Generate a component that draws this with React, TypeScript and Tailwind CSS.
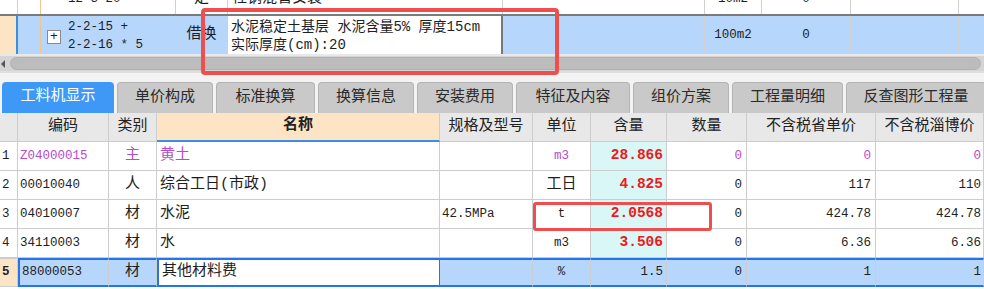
import React from "react";

const topCols = ["w-[18px]", "w-[23px]", "w-[135px]", "w-[52px]", "w-[275px]", "w-[202px]", "w-[57px]", "w-[89px]", "w-[108px]", "w-[25px]"];
const cols = ["w-[18px]", "w-[91px]", "w-[48px]", "w-[283px]", "w-[93px]", "w-[58px]", "w-[76px]", "w-[80px]", "w-[129px]", "w-[108px]"];

const tabs = [
  { label: "工料机显示", w: "w-[112px]" },
  { label: "单价构成", w: "w-[96px]" },
  { label: "标准换算", w: "w-[99px]" },
  { label: "换算信息", w: "w-[96px]" },
  { label: "安装费用", w: "w-[96px]" },
  { label: "特征及内容", w: "w-[114px]" },
  { label: "组价方案", w: "w-[96px]" },
  { label: "工程量明细", w: "w-[111px]" },
  { label: "反查图形工程量", w: "w-[140px]" },
];

const headers = ["", "编码", "类别", "名称", "规格及型号", "单位", "含量", "数量", "不含税省单价", "不含税淄博价"];

type Row = {
  n: string;
  code: string;
  type: string;
  name: string;
  spec: string;
  unit: string;
  qty: string;
  num: string;
  p1: string;
  p2: string;
  purple?: boolean;
  selected?: boolean;
};

const rows: Row[] = [
  { n: "1", code: "Z04000015", type: "主", name: "黄土", spec: "", unit: "m3", qty: "28.866", num: "0", p1: "0", p2: "0", purple: true },
  { n: "2", code: "00010040", type: "人", name: "综合工日(市政)", spec: "", unit: "工日", qty: "4.825", num: "0", p1: "117", p2: "110" },
  { n: "3", code: "04010007", type: "材", name: "水泥", spec: "42.5MPa", unit: "t", qty: "2.0568", num: "0", p1: "424.78", p2: "424.78" },
  { n: "4", code: "34110003", type: "材", name: "水", spec: "", unit: "m3", qty: "3.506", num: "0", p1: "6.36", p2: "6.36" },
  { n: "5", code: "88000053", type: "材", name: "其他材料费", spec: "", unit: "%", qty: "1.5", num: "0", p1: "1", p2: "1", selected: true },
];

function TopGrid() {
  return (
    <div>
      {/* partly scrolled-off row */}
      <div className="flex h-[14px] overflow-hidden bg-white text-[12.5px]">
        <div className={`${topCols[0]} shrink-0 border-r border-[#d0d0d0]`} />
        <div className={`${topCols[1]} shrink-0 border-r border-[#f3c58e]`} />
        <div className={`${topCols[2]} shrink-0 border-r border-[#d0d0d0] pl-[27px]`}>
          <div className="-mt-[9px] leading-[16px]">12-3-20</div>
        </div>
        <div className={`${topCols[3]} shrink-0 border-r border-[#d0d0d0] text-center text-[15px]`}>
          <div className="-mt-[10px] leading-[18px]">定</div>
        </div>
        <div className={`${topCols[4]} shrink-0 border-r border-[#d0d0d0] pl-[4px] text-[15px]`}>
          <div className="-mt-[10px] leading-[18px]">柱钢混管安装</div>
        </div>
        <div className={`${topCols[5]} shrink-0 border-r border-[#d0d0d0]`} />
        <div className={`${topCols[6]} shrink-0 border-r border-[#d0d0d0] text-center`}>
          <div className="-mt-[9px] leading-[16px]">10m2</div>
        </div>
        <div className={`${topCols[7]} shrink-0 border-r border-[#d0d0d0] text-center`}>
          <div className="-mt-[9px] leading-[16px]">0</div>
        </div>
        <div className={`${topCols[8]} shrink-0 border-r border-[#d0d0d0]`} />
        <div className={`${topCols[9]} shrink-0`} />
      </div>
      <div className="h-[2px] bg-[#7b7b7b]" />
      {/* current row */}
      <div className="flex h-[38px] bg-[#b7d6fb] text-[12.5px]">
        <div className={`${topCols[0]} shrink-0 bg-[#fde4c4] border-r-2 border-[#3a8ee6]`} />
        <div className={`${topCols[1]} shrink-0 border-r border-[#f3c58e]`} />
        <div className={`${topCols[2]} shrink-0 border-r border-[#d0d0d0] flex items-center`}>
          <div className="ml-[6px] mt-[3px] w-[14px] h-[14px] bg-white border border-[#8a8a8a] flex items-center justify-center text-[13px] leading-none">
            +
          </div>
          <div className="ml-[7px] mt-[2px] leading-[18px] whitespace-pre">
            <div>2-2-15 +</div>
            <div>2-2-16 * 5</div>
          </div>
        </div>
        <div className={`${topCols[3]} shrink-0 border-r border-[#d0d0d0] flex items-center justify-center text-[15px]`}>
          借换
        </div>
        <div className={`${topCols[4]} shrink-0 bg-white border-r-2 border-[#777] pl-[3px] pt-[2px] text-[14px] leading-[18px]`}>
          <div>水泥稳定土基层 水泥含量5% 厚度15cm</div>
          <div>实际厚度(cm):20</div>
        </div>
        <div className={`${topCols[5]} shrink-0 border-r border-[#d0d0d0]`} />
        <div className={`${topCols[6]} shrink-0 border-r border-[#d0d0d0] flex items-center justify-center`}>100m2</div>
        <div className={`${topCols[7]} shrink-0 border-r border-[#d0d0d0] flex items-center justify-center`}>0</div>
        <div className={`${topCols[8]} shrink-0 border-r border-[#d0d0d0]`} />
        <div className={`${topCols[9]} shrink-0`} />
      </div>
    </div>
  );
}

function ScrollBar() {
  return (
    <div>
      <div className="h-[2px] bg-[#e8e8e8]" />
      <div className="flex items-center h-[17px] bg-[#d4d4d4] border-b-2 border-[#dedede]">
        <div className="w-0 h-0 ml-[1px] border-y-[4px] border-y-transparent border-r-[4px] border-r-[#555]" />
        <div className="ml-[5px] mr-[3px] flex-1 h-[13px] rounded-full bg-[#bcbcbc] border border-[#b2b2b2]" />
      </div>
    </div>
  );
}

function Tabs() {
  return (
    <div className="flex items-end h-[40px] gap-[3px] pl-[2px] bg-[#f3f3f3]">
      {tabs.map((t, i) => (
        <div
          key={t.label}
          className={`${t.w} shrink-0 h-[31px] rounded-t-[4px] flex items-center justify-center text-[15px] ${
            i === 0 ? "bg-[#3e98f6] text-white" : "bg-[#c9c9c9] text-[#2a2a2a] border border-b-0 border-[#b4b4b4]"
          }`}
        >
          {t.label}
        </div>
      ))}
    </div>
  );
}

function MaterialTable() {
  return (
    <div>
      <div className="flex h-[29px] bg-[#e8e8e8] text-[15px] text-[#222]">
        {headers.map((h, i) => (
          <div
            key={i}
            className={`${cols[i]} shrink-0 flex items-center justify-center border-r border-b border-[#cdcdcd] ${
              i === 3 ? "bg-[#fde4c4] font-bold border-b-2 border-b-[#3a8ee6]" : ""
            }`}
          >
            {h}
          </div>
        ))}
      </div>
      {rows.map((r) => {
        const sel = r.selected;
        const base = `shrink-0 flex items-center border-r border-[#cdcdcd] ${
          sel ? "border-y-2 border-y-[#2475e8] bg-[#b7d6fb]" : "border-b"
        }`;
        const color = r.purple ? "text-[#b54cc8]" : "text-[#1e1e1e]";
        const cjkUnit = r.unit === "工日";
        return (
          <div key={r.n} className="flex h-[29px] text-[12.5px]">
            <div
              className={`${cols[0]} shrink-0 flex items-center pl-[2px] border-r border-[#cdcdcd] ${
                sel ? "bg-[#fde4c4] font-bold border-y border-y-[#cdcdcd]" : "border-b"
              }`}
            >
              {r.n}
            </div>
            <div className={`${cols[1]} ${base} ${sel ? "border-l-2 border-l-[#2475e8]" : ""} pl-[2px] ${color}`}>{r.code}</div>
            <div className={`${cols[2]} ${base} justify-center text-[15px] ${color}`}>{r.type}</div>
            <div
              className={`${cols[3]} ${base} pl-[3px] text-[15px] ${color} ${
                sel ? "bg-white border-x-2 border-x-[#2475e8]" : ""
              }`}
            >
              {r.name}
            </div>
            <div className={`${cols[4]} ${base} pl-[2px]`}>{r.spec}</div>
            <div className={`${cols[5]} ${base} justify-center ${cjkUnit ? "text-[15px]" : ""} ${color}`}>{r.unit}</div>
            <div
              className={`${cols[6]} ${base} justify-end pr-[3px] ${
                sel ? "text-[#1e1e1e]" : "bg-[#d9f7f7] text-[#f01818] font-bold text-[14.5px]"
              }`}
            >
              {r.qty}
            </div>
            <div className={`${cols[7]} ${base} justify-end pr-[4px] ${color}`}>{r.num}</div>
            <div className={`${cols[8]} ${base} justify-end pr-[4px] ${color}`}>{r.p1}</div>
            <div className={`${cols[9]} ${base} justify-end pr-[2px] ${color}`}>{r.p2}</div>
          </div>
        );
      })}
    </div>
  );
}

export default function App() {
  return (
    <div className="relative w-[984px] h-[289px] overflow-hidden bg-white text-[#1e1e1e] font-['Liberation_Mono','Noto_Sans_CJK_SC',monospace]">
      <TopGrid />
      <ScrollBar />
      <Tabs />
      <MaterialTable />
      {/* highlight marks drawn over the grid */}
      <div className="absolute left-[201px] top-[8px] w-[358px] h-[67px] rounded-[4px] border-4 border-[#ef4e4e]" />
      <div className="absolute left-[533px] top-[202px] w-[179px] h-[29px] rounded-[3px] border-[3px] border-[#ef4e4e]" />
    </div>
  );
}
